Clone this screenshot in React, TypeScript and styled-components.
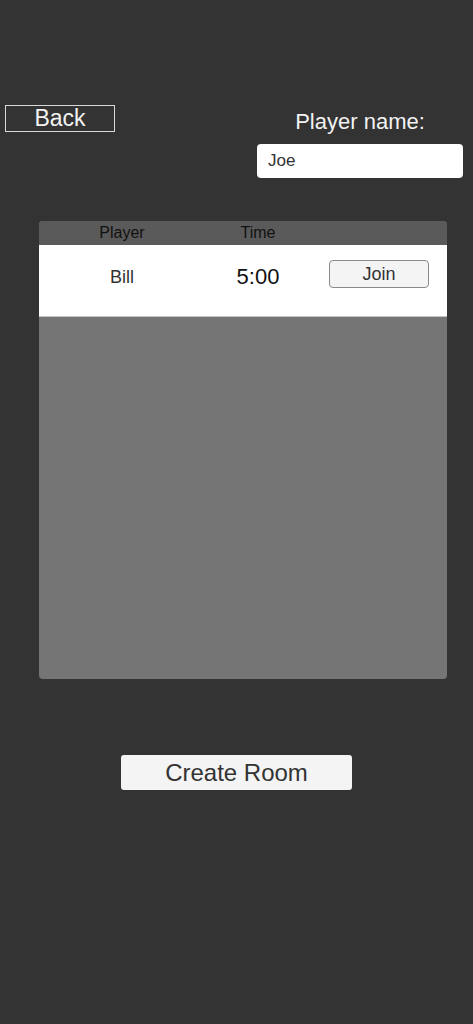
import styled, { createGlobalStyle } from 'styled-components';

const GlobalStyle = createGlobalStyle`
  html, body {
    margin: 0;
    padding: 0;
    background: #333333;
    font-family: "Liberation Sans", Arial, sans-serif;
  }
`;

const Page = styled.div`
  min-height: 1024px;
  padding-top: 105px;
  box-sizing: border-box;
`;

const TopBar = styled.div`
  display: flex;
  justify-content: space-between;
  align-items: flex-start;
  padding: 0 10px 0 5px;
`;

const BackButton = styled.button`
  width: 110px;
  height: 27px;
  background: transparent;
  border: 1px solid #d8d8d8;
  color: #f2f2f2;
  font-family: inherit;
  font-size: 23px;
  line-height: 25px;
  padding: 0;
`;

const NameBlock = styled.div`
  width: 206px;
  display: flex;
  flex-direction: column;
  align-items: center;
`;

const NameLabel = styled.div`
  height: 34px;
  line-height: 34px;
  color: #f2f2f2;
  font-size: 22px;
  margin-bottom: 5px;
`;

const NameInput = styled.input`
  width: 100%;
  height: 34px;
  box-sizing: border-box;
  border: none;
  border-radius: 4px;
  background: #ffffff;
  color: #323232;
  font-family: inherit;
  font-size: 17px;
  padding: 0 11px;
  outline: none;
`;

const Panel = styled.div`
  margin: 43px 26px 0 39px;
  height: 458px;
  background: #757575;
  border-radius: 4px;
  overflow: hidden;
`;

const Columns = styled.div<{ $height: number }>`
  display: grid;
  grid-template-columns: 166px 106px 1fr;
  align-items: center;
  height: ${(p) => p.$height}px;
  box-sizing: border-box;
`;

const Header = styled(Columns)`
  background: #5a5a5a;
`;

const Row = styled(Columns)`
  background: #ffffff;
  border-bottom: 1px solid #c4c4c4;
  padding-bottom: 7px;
`;

const Cell = styled.div<{ $size: number; $color: string }>`
  text-align: center;
  font-size: ${(p) => p.$size}px;
  color: ${(p) => p.$color};
`;

const JoinButton = styled.button`
  justify-self: center;
  width: 100px;
  height: 28px;
  margin-bottom: 6px;
  background: #f4f4f4;
  border: 1px solid #8a8a8a;
  border-radius: 4px;
  color: #333333;
  font-family: inherit;
  font-size: 18px;
  padding: 0;
`;

const CreateButton = styled.button`
  display: block;
  margin: 76px auto 0;
  width: 231px;
  height: 35px;
  background: #f4f4f4;
  border: none;
  border-radius: 3px;
  color: #333333;
  font-family: inherit;
  font-size: 24px;
  padding: 0;
`;

const rooms = [{ player: 'Bill', time: '5:00' }];

export default function App() {
  return (
    <>
      <GlobalStyle />
      <Page>
        <TopBar>
          <BackButton>Back</BackButton>
          <NameBlock>
            <NameLabel>Player name:</NameLabel>
            <NameInput defaultValue="Joe" />
          </NameBlock>
        </TopBar>
        <Panel>
          <Header $height={24}>
            <Cell $size={16} $color="#111111">Player</Cell>
            <Cell $size={16} $color="#111111">Time</Cell>
            <div />
          </Header>
          {rooms.map((room) => (
            <Row $height={72} key={room.player}>
              <Cell $size={18} $color="#333333">{room.player}</Cell>
              <Cell $size={22} $color="#111111">{room.time}</Cell>
              <JoinButton>Join</JoinButton>
            </Row>
          ))}
        </Panel>
        <CreateButton>Create Room</CreateButton>
      </Page>
    </>
  );
}
